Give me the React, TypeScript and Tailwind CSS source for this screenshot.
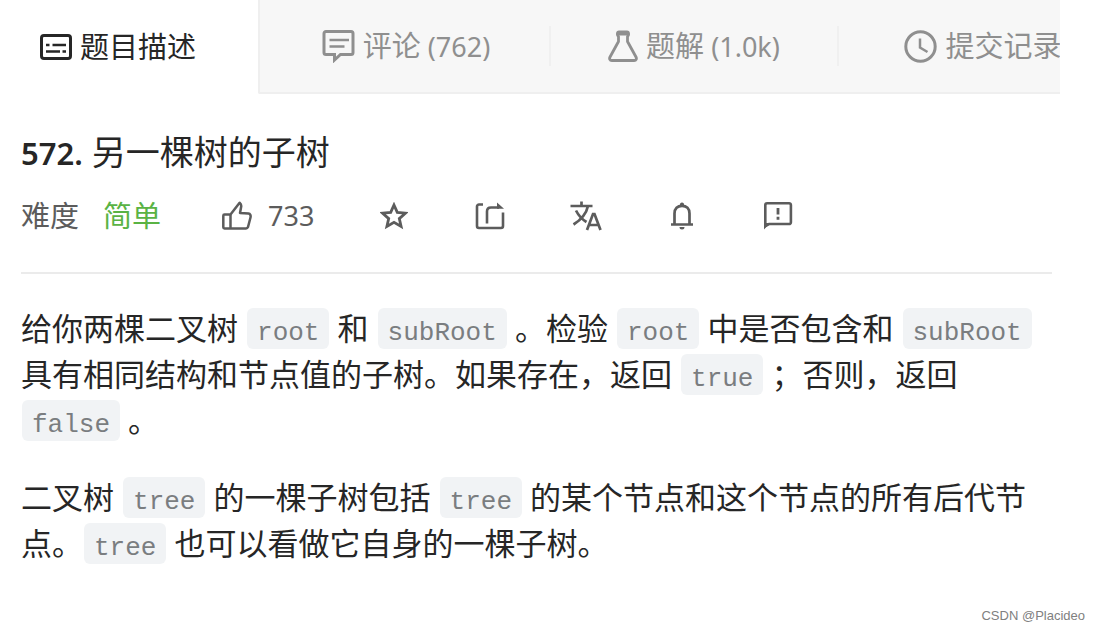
import type { ReactNode } from 'react';
import clsx from 'clsx';

function DescriptionIcon() {
  return (
    <svg width="32" height="26" viewBox="0 0 32 26" fill="none" stroke="currentColor">
      <rect x="1.5" y="1.5" width="29" height="23" rx="2.5" strokeWidth="3" />
      <path d="M6 11h3.5M12.5 11H26M6 17.5h14M22.5 17.5H26" strokeWidth="2.6" />
    </svg>
  );
}

function CommentIcon() {
  return (
    <svg width="33" height="34" viewBox="0 0 33 34" fill="none" stroke="currentColor" strokeWidth="3">
      <path d="M4 2.5h25a2 2 0 0 1 2 2v19a2 2 0 0 1-2 2H18.5l-6 5.500v-5.500H4a2 2 0 0 1-2-2v-19a2 2 0 0 1 2-2z" />
      <path d="M7.500 11h19.500M7.500 17.500h15" strokeWidth="2.6" />
    </svg>
  );
}

function FlaskIcon() {
  return (
    <svg width="30" height="32" viewBox="0 0 30 32" fill="none" stroke="currentColor" strokeWidth="2.8" strokeLinejoin="round">
      <path d="M10.500 6.500c-1.600-1-1.500-4.500 0.500-4.500h8c2 0 2.100 3.500 0.500 4.500l0 5 8.500 15.500c0.900 1.800 0.200 3.500-1.800 3.500H3.800c-2 0-2.700-1.700-1.800-3.500l8.500-15.500z" />
      <path d="M10 4h10" strokeWidth="3" />
    </svg>
  );
}

function ClockIcon() {
  return (
    <svg width="33" height="33" viewBox="0 0 33 33" fill="none" stroke="currentColor">
      <circle cx="16.500" cy="16.500" r="14.700" strokeWidth="3" />
      <path d="M16 8.500v9l7.500 4.500" strokeWidth="2.5" />
    </svg>
  );
}

function LikeIcon() {
  return (
    <svg width="30" height="30" viewBox="0 0 30 30" fill="none" stroke="currentColor" strokeWidth="2.5" strokeLinejoin="round">
      <path d="M8.500 13.500H2.500a1.200 1.200 0 0 0-1.200 1.200v11.500a1.200 1.200 0 0 0 1.200 1.200h21.500c1 0 1.600-0.500 2-1.400l2.500-9.500c0.500-2-0.300-3.700-2-3.900l-8.500-0.600 1.200-6.500c0.300-1.700-0.600-2.800-1.600-3.700z" />
      <path d="M8.500 13.500v13.800" />
    </svg>
  );
}

function StarIcon() {
  return (
    <svg width="28" height="28" viewBox="0 0 28 28" fill="none" stroke="currentColor" strokeWidth="2.8">
      <path d="M14 3l3.300 7.400 8.100.800-6.100 5.400 1.800 7.900L14 20.400l-7.100 4.100 1.800-7.900-6.100-5.400 8.100-.800z" />
    </svg>
  );
}

function ShareIcon() {
  return (
    <svg width="30" height="28" viewBox="0 0 30 28" fill="none" stroke="currentColor" strokeWidth="2.6">
      <path d="M8 2.500H4a2 2 0 0 0-2 2v19.500a2 2 0 0 0 2 2h22a2 2 0 0 0 2-2V10.500" />
      <path d="M12 21.500V9.500c0-2.500 1.200-4 4-4h8" />
      <path d="M22 0.500l7 6.200h-7z" fill="currentColor" stroke="none" />
    </svg>
  );
}

function TranslateIcon() {
  return (
    <svg width="32" height="30" viewBox="0 0 32 30" fill="none" stroke="currentColor" strokeWidth="2.7">
      <path d="M0.500 5h22M11.500 0.500V5M18 5c-1.500 7-6.500 13.500-14.500 18.500M6 9.500c2.500 5 5.500 8.500 10.500 11.500" />
      <path d="M17 29l6-16h1.500l6 16M19.500 24h8.500" />
    </svg>
  );
}

function BellIcon() {
  return (
    <svg width="24" height="28" viewBox="0 0 24 28" fill="none" stroke="currentColor" strokeWidth="2.7">
      <path d="M4.500 22V11.500C4.500 6.500 7.500 3.800 12 3.800s7.500 2.700 7.500 7.700V22M1 22.500h22" />
      <path d="M9.800 3.500a2.200 3 0 0 1 4.400 0zM9.500 25h5a2.500 2.500 0 0 1-5 0z" fill="currentColor" stroke="none" />
    </svg>
  );
}

function FeedbackIcon() {
  return (
    <svg width="30" height="30" viewBox="0 0 30 30" fill="none" stroke="currentColor" strokeWidth="2.6">
      <path d="M2.300 25V4a1.800 1.800 0 0 1 1.800-1.800h22a1.800 1.800 0 0 1 1.800 1.800v17.200a1.800 1.800 0 0 1-1.800 1.800H6z" />
      <path d="M1 22h6l-6 6.500z" fill="currentColor" stroke="none" />
      <path d="M15 7v6.500M15 15.800v3" strokeWidth="2.8" />
    </svg>
  );
}

const otherTabs = [
  { label: '评论', count: '(762)', icon: <CommentIcon /> },
  { label: '题解', count: '(1.0k)', icon: <FlaskIcon /> },
  { label: '提交记录', icon: <ClockIcon /> },
];

const actions = [
  { name: '收藏', icon: <StarIcon /> },
  { name: '分享', icon: <ShareIcon /> },
  { name: '切换语言', icon: <TranslateIcon /> },
  { name: '订阅', icon: <BellIcon /> },
  { name: '反馈', icon: <FeedbackIcon /> },
];

function Code({ children }: { children: ReactNode }) {
  return (
    <code className="ml-px rounded-md bg-[#f1f3f5] px-[10px] pt-[10px] pb-px font-['Liberation_Mono',monospace] text-[26px] leading-none text-[#7a7d80]">
      {children}
    </code>
  );
}

export default function App() {
  return (
    <div className="flex min-h-screen flex-col bg-white font-['Noto_Sans','Noto_Sans_CJK_SC',sans-serif] text-[#262626]">
      <div role="tablist" className="mr-[39px] flex h-[94px] overflow-hidden text-[29px] whitespace-nowrap">
        <button role="tab" aria-selected="true" className="flex w-[258px] shrink-0 items-center gap-2 pl-10">
          <DescriptionIcon />
          题目描述
        </button>
        <div className="flex flex-1 items-center overflow-hidden rounded-bl-xs border-b-2 border-l-2 border-[#efefef] bg-[#f7f7f7] pl-[3px] text-[#8f8f8f]">
          {otherTabs.map((tab, i) => (
            <button
              key={tab.label}
              role="tab"
              aria-selected="false"
              className={clsx(
                'flex h-10 w-72 shrink-0 items-center justify-center gap-2',
                i < otherTabs.length - 1 && 'border-r-2 border-[#f0f0f0]',
              )}
            >
              {tab.icon}
              <span>
                {tab.label}
                {tab.count && <span className="text-[27px]"> {tab.count}</span>}
              </span>
            </button>
          ))}
        </div>
      </div>

      <main className="pr-[47px] pl-[21px]">
        <h1 className="mt-[34px] text-[34px] leading-[48px]">
          <span className="mr-px text-[31px] font-semibold">572. </span>另一棵树的子树
        </h1>

        <div className="mt-[19px] flex h-10 items-center text-[29px] text-[#5c5c5c]">
          <span>难度</span>
          <span className="ml-6 text-[#5ab344]">简单</span>
          <button className="mr-8 ml-[61px] flex items-center gap-4">
            <LikeIcon />
            <span className="text-[27px]">733</span>
          </button>
          {actions.map(action => (
            <button key={action.name} aria-label={action.name} className="flex w-24 justify-center">
              {action.icon}
            </button>
          ))}
        </div>

        <hr className="mt-9 border-t-2 border-[#ebebeb]" />

        <div className="mt-[31px] space-y-[31px] text-[31px] leading-[46px]">
          <p>
            给你两棵二叉树 <Code>root</Code> 和 <Code>subRoot</Code> 。检验 <Code>root</Code> 中是否包含和 <Code>subRoot</Code>{' '}
            具有相同结构和节点值的子树。如果存在，返回 <Code>true</Code> ；否则，返回 <Code>false</Code> 。
          </p>
          <p>
            二叉树 <Code>tree</Code> 的一棵子树包括 <Code>tree</Code> 的某个节点和这个节点的所有后代节点。<Code>tree</Code>{' '}
            也可以看做它自身的一棵子树。
          </p>
        </div>
      </main>

      <footer className="mt-auto pr-[14px] pb-1 text-right font-['Liberation_Sans',sans-serif] text-[13px] leading-5 text-[#808080]">
        CSDN @Placideo
      </footer>
    </div>
  );
}
